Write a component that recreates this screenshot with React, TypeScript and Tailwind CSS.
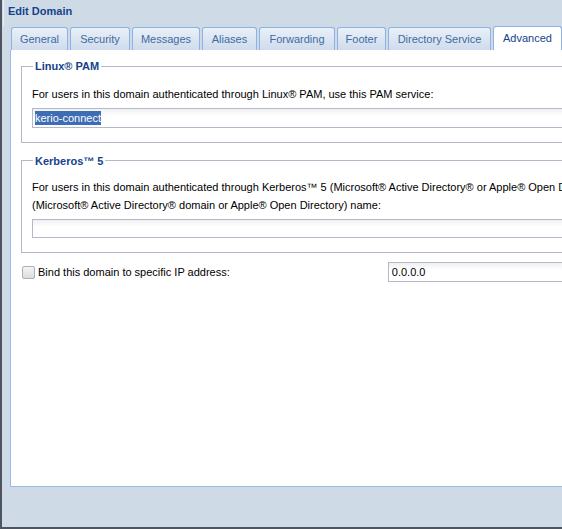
import React from 'react'

const tabs = [
  { label: 'General', w: 'w-[57px]' },
  { label: 'Security', w: 'w-[60px]' },
  { label: 'Messages', w: 'w-[68px]' },
  { label: 'Aliases', w: 'w-[55px]' },
  { label: 'Forwarding', w: 'w-[76px]' },
  { label: 'Footer', w: 'w-[49px]' },
  { label: 'Directory Service', w: 'w-[103px]' },
  { label: 'Advanced', w: 'w-[69px]', active: true },
]

export default function App() {
  return (
    <div className="h-[529px] w-[562px] overflow-hidden bg-white font-['Liberation_Sans',Arial,sans-serif] text-[11px] text-black">
      <div className="flex h-[529px] w-[640px] flex-col border-b-2 border-l-2 border-[#4e5560] bg-[#cfdae7] pl-[1px]">
        <div className="flex h-[26px] items-center border-l border-[#e8eef6] pb-[4px] pl-[4px] text-[11px] font-bold text-[#15428b]">
          Edit Domain
        </div>
        <div className="flex flex-1 flex-col pl-[7px]">
          {/* tab strip */}
          <div className="flex h-[24px] items-end gap-[2px] pl-[1px]">
            {tabs.map((t) => (
              <div
                key={t.label}
                className={
                  t.active
                    ? `${t.w} flex h-[24px] items-center justify-center rounded-t-[3px] border border-b-0 border-[#8db2e3] bg-white text-[#15428b]`
                    : `${t.w} flex h-[23px] items-center justify-center rounded-t-[3px] border border-b-0 border-[#8db2e3] bg-gradient-to-b from-[#e9f0f8] to-[#cfdcec] text-[#416aa3]`
                }
              >
                {t.label}
              </div>
            ))}
          </div>
          {/* panel */}
          <div className="flex h-[437px] flex-col border-b border-l border-[#99bbe8] bg-white pl-[10px] pt-[8px]">
            <fieldset className="w-[620px] border border-[#b5b8c8] px-[10px] pb-[14px] pt-0">
              <legend className="ml-[1px] px-[2px] text-[11px] font-bold text-[#15428b]">Linux® PAM</legend>
              <div className="mt-[10px] leading-[18px]">
                For users in this domain authenticated through Linux® PAM, use this PAM service:
              </div>
              <div className="mt-[5px] flex h-[20px] items-center border border-[#b5b8c8] bg-gradient-to-b from-[#f0f0f0] to-white to-[40%] pl-[2px]">
                <span className="bg-[#3d6db5] leading-[14px] text-white">kerio-connect</span>
              </div>
            </fieldset>
            <fieldset className="mt-[10px] w-[620px] border border-[#b5b8c8] px-[10px] pb-[14px] pt-0">
              <legend className="ml-[1px] px-[2px] text-[11px] font-bold text-[#15428b]">Kerberos™ 5</legend>
              <div className="mt-[9px] whitespace-nowrap leading-[18px]">
                For users in this domain authenticated through Kerberos™ 5 (Microsoft® Active Directory® or Apple® Open Directory®), use this realm
                <br />
                (Microsoft® Active Directory® domain or Apple® Open Directory) name:
              </div>
              <div className="mt-[5px] h-[19px] border border-[#b5b8c8] bg-gradient-to-b from-[#f0f0f0] to-white to-[40%]" />
            </fieldset>
            <div className="mt-[9px] flex h-[20px] items-center">
              <div className="ml-[1px] h-[13px] w-[13px] rounded-[2px] border border-[#a8b0bc] bg-gradient-to-b from-[#f4f4f4] to-[#dcdcdc]" />
              <span className="ml-[3px]">Bind this domain to specific IP address:</span>
              <div className="ml-[158px] flex h-[20px] w-[200px] items-center border border-[#b5b8c8] bg-gradient-to-b from-[#f0f0f0] to-white to-[40%] pl-[3px]">
                0.0.0.0
              </div>
            </div>
          </div>
          <div className="flex-1" />
        </div>
      </div>
    </div>
  )
}
